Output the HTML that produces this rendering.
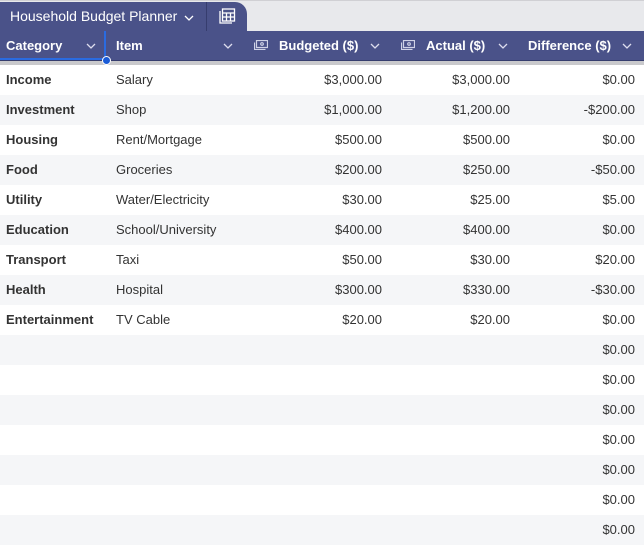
<!DOCTYPE html>
<html><head><style>
body{margin:0;width:644px;height:536px;overflow:hidden;background:#fff;font-family:"Liberation Sans",Arial,sans-serif;}
.tabbar{position:absolute;left:0;top:0;width:644px;height:31px;background:#e8e9ec;border-top:1px solid #d0d0d4;box-sizing:border-box}
.tab{position:absolute;left:0;top:2px;width:247px;height:29px;background:#4a5289;border-top-right-radius:12px;color:#fff;font-size:14px}
.tab .t{position:absolute;left:10px;top:6px}
.sep{position:absolute;left:206px;top:0;width:1px;height:29px;background:#363d6e}
.hdr{position:absolute;left:0;top:31px;width:644px;height:29px;background:#4a5289;border-bottom:1px solid #363d6e;color:#fff;font-weight:bold;font-size:13px}
.grey{position:absolute;left:0;top:61px;width:644px;height:4px;background:#c9c9cc}
.h{position:absolute;top:7px}
.chev{position:absolute;top:12px}
.row{position:absolute;left:0;width:644px;height:30px;font-size:13px;color:#333}
.row div{position:absolute;top:7px}
.alt{background:#f5f6f8}
.r{text-align:right}
</style></head><body>
<div class="tabbar"></div>
<div class="tab"><span class="t">Household Budget Planner</span>
<svg style="position:absolute;left:184px;top:13px" width="10" height="7"><path d="M1 1l4 4 4-4" stroke="#fff" stroke-width="1.3" fill="none"/></svg>
<div class="sep"></div>
<svg style="position:absolute;left:219px;top:6px" width="17" height="17" fill="none" stroke="#fff" stroke-width="1.3"><path d="M1 3v12h12"/><rect x="3.5" y="1" width="12" height="12"/><path d="M3.5 5h12M7.5 5v8M11.5 5v8M3.5 9h12"/></svg>
</div>
<div class="hdr">
<div style="position:absolute;left:0;top:0;width:106px;height:29px;border-right:2px solid #2a6be0;border-bottom:2px solid #2a6be0;box-sizing:border-box"></div>
<span class="h" style="left:6px">Category</span>
<span class="h" style="left:116px">Item</span>
<span class="h" style="left:279px">Budgeted ($)</span>
<span class="h" style="left:426px">Actual ($)</span>
<span class="h" style="left:528px">Difference ($)</span>
<svg class="chev" style="left:86px" width="10" height="7"><path d="M1 1l4 4 4-4" stroke="#dde" stroke-width="1.3" fill="none"/></svg>
<svg class="chev" style="left:223px" width="10" height="7"><path d="M1 1l4 4 4-4" stroke="#dde" stroke-width="1.3" fill="none"/></svg>
<svg class="chev" style="left:370px" width="10" height="7"><path d="M1 1l4 4 4-4" stroke="#dde" stroke-width="1.3" fill="none"/></svg>
<svg class="chev" style="left:498px" width="10" height="7"><path d="M1 1l4 4 4-4" stroke="#dde" stroke-width="1.3" fill="none"/></svg>
<svg class="chev" style="left:622px" width="10" height="7"><path d="M1 1l4 4 4-4" stroke="#dde" stroke-width="1.3" fill="none"/></svg>
<svg style="position:absolute;left:254px;top:9px" width="14" height="10" fill="none" stroke="#cfd2e6" stroke-width="1.2"><rect x="2.5" y="0.5" width="11" height="7"/><path d="M0.5 2.5v7h11"/><circle cx="8" cy="4" r="1.3"/></svg>
<svg style="position:absolute;left:401px;top:9px" width="14" height="10" fill="none" stroke="#cfd2e6" stroke-width="1.2"><rect x="2.5" y="0.5" width="11" height="7"/><path d="M0.5 2.5v7h11"/><circle cx="8" cy="4" r="1.3"/></svg>
</div>
<div style="position:absolute;left:102px;top:56px;width:9px;height:9px;border-radius:50%;background:#1a5bd6;border:1px solid #fff;z-index:3;box-sizing:border-box"></div>
<div class="grey"></div>
<div id="rows"></div>
<script>
var d=[["Income","Salary","$3,000.00","$3,000.00","$0.00"],["Investment","Shop","$1,000.00","$1,200.00","-$200.00"],["Housing","Rent/Mortgage","$500.00","$500.00","$0.00"],["Food","Groceries","$200.00","$250.00","-$50.00"],["Utility","Water/Electricity","$30.00","$25.00","$5.00"],["Education","School/University","$400.00","$400.00","$0.00"],["Transport","Taxi","$50.00","$30.00","$20.00"],["Health","Hospital","$300.00","$330.00","-$30.00"],["Entertainment","TV Cable","$20.00","$20.00","$0.00"]];
var h="";
for(var i=0;i<16;i++){var r=d[i]||["","","","","$0.00"];
h+='<div class="row'+(i%2?' alt':'')+'" style="top:'+(65+i*30)+'px">'+
'<div style="left:6px;font-weight:bold">'+r[0]+'</div><div style="left:116px">'+r[1]+'</div>'+
'<div class="r" style="right:262px">'+r[2]+'</div><div class="r" style="right:134px">'+r[3]+'</div><div class="r" style="right:9px">'+r[4]+'</div></div>';}
document.getElementById("rows").innerHTML=h;
</script>
</body></html>
